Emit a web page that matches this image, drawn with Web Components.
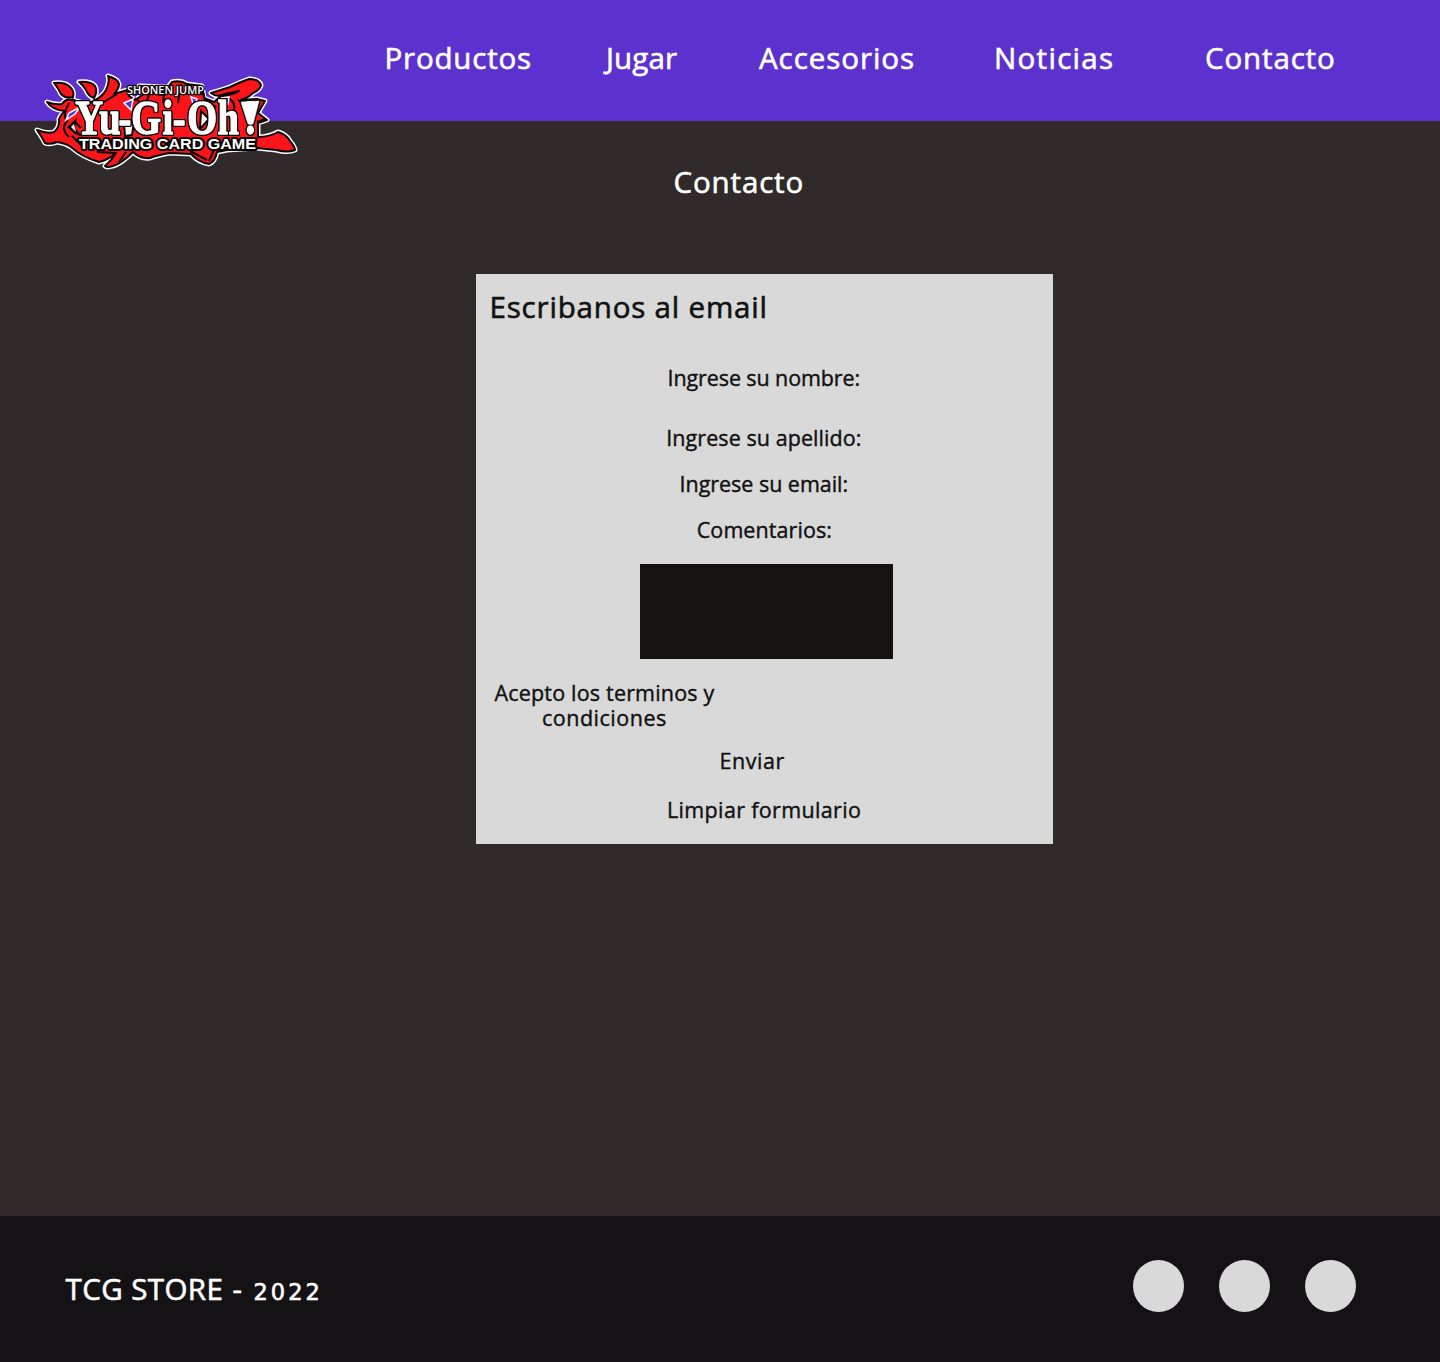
<!DOCTYPE html>
<html lang="es">
<head>
<meta charset="utf-8">
<title>TCG Store - Contacto</title>
<style>
body{margin:0;background:#302a2a;font-family:"Open Sans","Noto Sans",sans-serif;font-weight:500}
</style>
</head>
<body>
<tcg-page></tcg-page>
<script>
const pen = document.createElement('canvas').getContext('2d');

// A single line of text whose letters are spread over the width given in "w".
class TcgText extends HTMLElement {
  connectedCallback() {
    const w = +this.getAttribute('w'), size = +this.getAttribute('size') || 21.5;
    const font = this.getAttribute('font') || 'Open Sans';
    const text = this.textContent;
    pen.font = `500 ${size}px "${font}"`;
    const m = pen.measureText(text);
    const ink = m.actualBoundingBoxRight + m.actualBoundingBoxLeft;
    const gap = (w - 1 - ink) / Math.max(1, text.length - 1);
    const line = size > 25 ? 36 : 25;
    this.attachShadow({mode:'open'}).innerHTML = `<style>
      :host{display:block;flex:none;width:${w}px;height:${line}px;
        line-height:${line}px;font-family:"${font}",sans-serif;font-size:${size}px;white-space:nowrap}
      span{display:block;letter-spacing:${gap}px;margin-left:${m.actualBoundingBoxLeft + .5}px;
        -webkit-text-stroke:${size > 22 ? .6 : .4}px currentColor}
    </style><span><slot></slot></span>`;
  }
}
customElements.define('tcg-text', TcgText);

class TcgLogo extends HTMLElement {
  connectedCallback() {
    this.attachShadow({mode:'open'}).innerHTML = `<style>
      :host{display:block;width:272px;height:102px} svg{display:block}
      .name{filter:drop-shadow(1px 0 0 #080506) drop-shadow(-1px 0 0 #080506) drop-shadow(0 1px 0 #080506) drop-shadow(0 -1px 0 #080506)}
    </style>
    <svg width="272" height="102" viewBox="30 70 272 102">
      <defs><g id="s">
        <path d="M54 83Q64 82 69 86Q75 91 73 97Q66 99 61 94Q58 88 54 83Z"/>
        <path d="M79 82Q91 81 95 86Q98 91 94 98Q88 96 86 90Q83 85 79 82Z"/>
        <path d="M47 102Q55 105 62 104Q66 98 72 100L87 104Q102 98 106 90Q110 82 108 76Q118 79 119 84Q119 89 114 94L131 89L129 96L135 100L144 94L139 86L168 87L172 82Q181 80 187 84L202 86L204 98L214 102L221 96Q233 95 239 91L225 94Q217 98 211 93Q221 90 230 87Q240 82 249 79Q259 79 261 85Q260 90 253 93Q248 98 241 100L257 99L265 101L258 113L267 120L258 123V137Q269 137 278 132Q286 134 290 141Q295 147 295 150Q288 153 276 150L257 148L227 150L217 152Q215 162 209 164Q198 162 191 154L170 153Q158 155 150 158Q140 159 133 152Q121 164 113 166Q107 168 105 166Q112 160 116 153Q108 160 99 162Q82 157 71 147Q65 143 57 142Q50 145 45 143Q42 137 37 130Q48 134 54 132Q60 127 59 119Q61 114 65 111Q52 110 47 102Z"/>
      </g></defs>
      <use href="#s" fill="#fff" stroke="#fff" stroke-width="5" stroke-linejoin="round"/>
      <use href="#s" fill="#fb151b" stroke="#080506" stroke-width="2" stroke-linejoin="round"/>
      <g fill="none" stroke="#080506" stroke-width="2">
        <path d="M69 103Q62 116 67 121Q60 129 69 137M72 99L85 106M74 121L81 128M94 99Q99 107 93 110M117 94L99 105M135 98L143 105L138 112M151 88L145 107M165 88L163 103M181 84L178 103M202 87L205 100L216 107M226 97Q236 101 234 110M238 100L248 106L260 105M72 136L84 148M97 152L115 153M126 152L119 162M190 151L207 160M214 150L209 161M257 122L265 119M150 93L163 95M184 94L202 94"/>
      </g>
      <g fill="#5c31ce" stroke="#fff" stroke-width="1.5">
        <path d="M66 120L69 113L80 107L75 114Z"/><path d="M124 103L133 99L131 110Z"/><path d="M191 97L197 99L194 107Z"/><path d="M222 98L229 97L228 104Z"/>
      </g>
      <path d="M67 127L77 118L75 128L83 137L75 134Z" fill="#080506"/><path d="M71 127L74 124L76 132Z" fill="#fff"/>
      <path d="M124 124L134 121L132 135L125 136ZM201 111L209 119L200 129Z" fill="#fff" stroke="#080506" stroke-width="2"/>
      <g class="name" fill="#fff" stroke="#fff" stroke-width="1.3" stroke-linejoin="round">
        <text transform="scale(.8 1)" x="94 124 148 164 203 216 234 272 305" y="134" font-family="Liberation Serif" font-weight="700" font-size="48">Yu-Gi-Oh!</text>
        <path d="M241 102L259 101L253 124H248Z" stroke-width=".5"/>
      </g>
      <g paint-order="stroke" stroke-linejoin="round" fill="#fff" stroke="#080506">
        <text x="79" y="149" textLength="177" lengthAdjust="spacingAndGlyphs" font-family="Liberation Sans" font-weight="700" font-size="15" stroke-width="4">TRADING CARD GAME</text>
        <text x="127" y="94" textLength="77" lengthAdjust="spacingAndGlyphs" font-family="Open Sans" font-weight="600" font-size="10.5" stroke-width="2.6">SHONEN JUMP</text>
      </g>
    </svg>`;
  }
}
customElements.define('tcg-logo', TcgLogo);

class TcgHeader extends HTMLElement {
  connectedCallback() {
    this.attachShadow({mode:'open'}).innerHTML = `<style>
      :host{display:block;position:relative;height:121px;background:#5c31ce;color:#fff}
      nav{display:flex;padding:40px 0 0 386px}
      tcg-logo{position:absolute;left:30px;top:70px}
      .j{margin-left:72px}.a{margin-left:81px}.n{margin-left:82px}.c{margin-left:93px}
    </style>
    <nav><tcg-text size="29.5" w="144.5">Productos</tcg-text><tcg-text class="j" size="29.5" w="75">Jugar</tcg-text><tcg-text class="a" size="29.5" w="155">Accesorios</tcg-text><tcg-text class="n" size="29.5" w="117">Noticias</tcg-text><tcg-text class="c" size="29.5" w="129">Contacto</tcg-text></nav>
    <tcg-logo></tcg-logo>`;
  }
}
customElements.define('tcg-header', TcgHeader);

class ContactForm extends HTMLElement {
  connectedCallback() {
    this.attachShadow({mode:'open'}).innerHTML = `<style>
      :host{display:flex;flex-direction:column;align-items:center;box-sizing:border-box;width:577px;height:570px;background:#d9d9d9;color:#111;padding-top:15px}
      .h{align-self:flex-start;margin:0 0 40px 15px}
      .n{margin-bottom:35px}.l{margin-bottom:21px}.k{margin-bottom:22px}
      .box{width:253px;height:95px;background:#141310;margin:0 0 21px 4px}
      .terms{align-self:flex-start;margin:0 0 18px 18px;display:flex;flex-direction:column;align-items:center}
      .send{margin:0 23px 24px 0}
    </style>
    <tcg-text class="h" size="29.5" w="274">Escribanos al email</tcg-text>
    <tcg-text class="n" w="191">Ingrese su nombre:</tcg-text>
    <tcg-text class="l" w="193.5">Ingrese su apellido:</tcg-text>
    <tcg-text class="l" w="167">Ingrese su email:</tcg-text>
    <tcg-text class="k" w="134.5">Comentarios:</tcg-text>
    <div class="box"></div>
    <div class="terms"><tcg-text w="221">Acepto los terminos y</tcg-text><tcg-text w="124">condiciones</tcg-text></div>
    <tcg-text class="send" w="64">Enviar</tcg-text>
    <tcg-text w="192">Limpiar formulario</tcg-text>`;
  }
}
customElements.define('contact-form', ContactForm);

class TcgFooter extends HTMLElement {
  connectedCallback() {
    this.attachShadow({mode:'open'}).innerHTML = `<style>
      :host{display:flex;justify-content:space-between;align-items:flex-start;box-sizing:border-box;height:146px;background:#151216;color:#fff;padding:44px 84px 0 65px}
      p{display:flex;align-items:baseline;margin:11px 0 0}
      .d{margin-left:11px}.y{margin-left:11px}
      .dots{display:flex;gap:35px}.dots i{width:51px;height:52px;border-radius:50%;background:#d9d9d9}
    </style>
    <p><tcg-text size="29.5" w="157">TCG STORE</tcg-text><tcg-text class="d" size="29.5" w="10">-</tcg-text><tcg-text class="y" font="DejaVu Sans" size="22.5" w="65">2022</tcg-text></p>
    <div class="dots"><i></i><i></i><i></i></div>`;
  }
}
customElements.define('tcg-footer', TcgFooter);

class TcgPage extends HTMLElement {
  connectedCallback() {
    this.attachShadow({mode:'open'}).innerHTML = `<style>
      :host{display:flex;flex-direction:column;height:1362px;background:#302a2a}
      main{flex:1;color:#fff;padding-top:43px}
      .t{margin-left:674px}
      contact-form{margin:74px 0 0 476px}
    </style>
    <tcg-header></tcg-header>
    <main><tcg-text class="t" size="29.5" w="129">Contacto</tcg-text><contact-form></contact-form></main>
    <tcg-footer></tcg-footer>`;
  }
}
customElements.define('tcg-page', TcgPage);
</script>
</body>
</html>
